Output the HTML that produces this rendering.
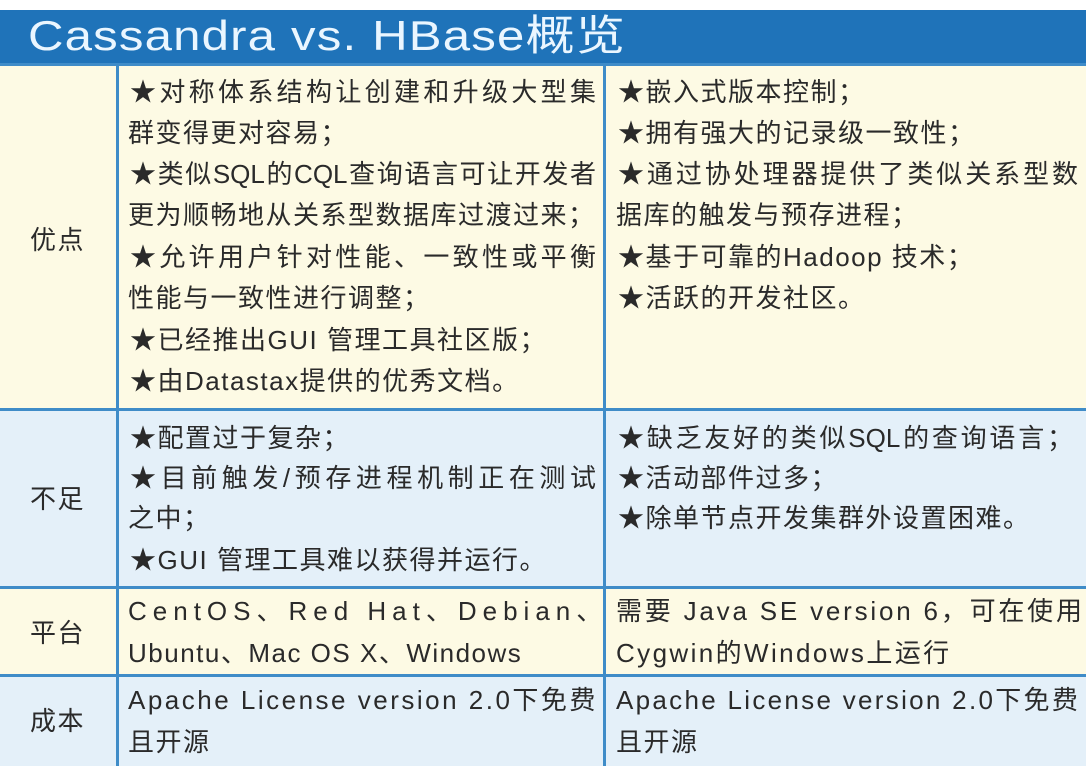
<!DOCTYPE html>
<html><head><meta charset="utf-8"><style>
body{margin:0;width:1086px;height:766px;overflow:hidden;background:#fff;position:relative;font-family:"Liberation Sans","Noto Sans CJK SC",sans-serif;}
.t{position:absolute;left:0;top:10px;width:1086px;height:53px;background:#1f73b9;border-bottom:3px solid #4a9bd4;}
.t span{position:absolute;left:28px;top:3px;color:#eaf6ff;font-size:42px;line-height:46px;transform:scaleX(1.17);transform-origin:left;letter-spacing:1px;}
.r{position:absolute;left:0;width:1086px;border-top:3px solid #3f8cc8;box-sizing:border-box;}
.v{position:absolute;top:65px;width:3px;height:701px;background:#3f8cc8;}
.l{position:absolute;font-size:26px;color:#2a2a2a;white-space:nowrap;line-height:30px;letter-spacing:1.5px;}
.j{text-align:justify;text-align-last:justify;letter-spacing:0;}
</style></head><body>
<div class="t"><span>Cassandra vs. HBase概览</span></div>
<div class="r" style="top:63px;height:347px;background:#fdfae4"></div>
<div class="r" style="top:408px;height:180px;background:#e4f0f9"></div>
<div class="r" style="top:586px;height:90px;background:#fdfae4"></div>
<div class="r" style="top:674px;height:92px;background:#e4f0f9"></div>
<div class="v" style="left:116px"></div>
<div class="v" style="left:603px"></div>

<div class="l" style="left:30px;top:225px">优点</div>
<div class="l" style="left:30px;top:484px">不足</div>
<div class="l" style="left:30px;top:618px">平台</div>
<div class="l" style="left:30px;top:706px">成本</div>

<div class="l j" style="left:130px;width:466px;top:77px">★对称体系结构让创建和升级大型集</div>
<div class="l" style="left:128px;top:118px">群变得更对容易；</div>
<div class="l j" style="left:130px;width:466px;top:159px">★类似SQL的CQL查询语言可让开发者</div>
<div class="l j" style="left:128px;width:466px;top:200px">更为顺畅地从关系型数据库过渡过来；</div>
<div class="l j" style="left:130px;width:466px;top:242px">★允许用户针对性能、一致性或平衡</div>
<div class="l" style="left:128px;top:283px">性能与一致性进行调整；</div>
<div class="l" style="left:130px;top:325px">★已经推出GUI 管理工具社区版；</div>
<div class="l" style="left:130px;top:366px">★由Datastax提供的优秀文档。</div>

<div class="l" style="left:618px;top:77px">★嵌入式版本控制；</div>
<div class="l" style="left:618px;top:118px">★拥有强大的记录级一致性；</div>
<div class="l j" style="left:618px;width:460px;top:159px">★通过协处理器提供了类似关系型数</div>
<div class="l" style="left:616px;top:200px">据库的触发与预存进程；</div>
<div class="l" style="left:618px;top:242px">★基于可靠的Hadoop 技术；</div>
<div class="l" style="left:618px;top:283px">★活跃的开发社区。</div>

<div class="l" style="left:130px;top:423px">★配置过于复杂；</div>
<div class="l j" style="left:130px;width:466px;top:463px">★目前触发/预存进程机制正在测试</div>
<div class="l" style="left:128px;top:503px">之中；</div>
<div class="l" style="left:130px;top:545px">★GUI 管理工具难以获得并运行。</div>

<div class="l j" style="left:618px;width:455px;top:423px">★缺乏友好的类似SQL的查询语言；</div>
<div class="l" style="left:618px;top:463px">★活动部件过多；</div>
<div class="l" style="left:618px;top:503px">★除单节点开发集群外设置困难。</div>

<div class="l" style="left:128px;top:596px;letter-spacing:6px">CentOS、Red Hat、Debian、</div>
<div class="l" style="left:128px;top:638px;letter-spacing:1.5px">Ubuntu、Mac OS X、Windows</div>
<div class="l" style="left:616px;top:596px;letter-spacing:2.8px">需要 Java SE version 6，可在使用</div>
<div class="l" style="left:616px;top:638px;letter-spacing:2.4px">Cygwin的Windows上运行</div>

<div class="l" style="left:128px;top:685px;letter-spacing:2.5px">Apache License version 2.0下免费</div>
<div class="l" style="left:128px;top:727px">且开源</div>
<div class="l" style="left:616px;top:685px;letter-spacing:2.3px">Apache License version 2.0下免费</div>
<div class="l" style="left:616px;top:727px">且开源</div>
</body></html>
